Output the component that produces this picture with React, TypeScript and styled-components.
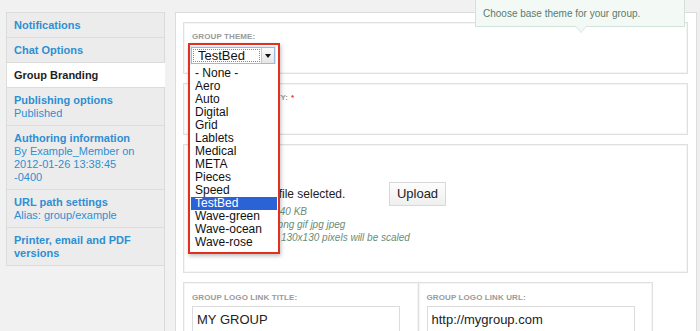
import React from 'react';
import styled, { createGlobalStyle } from 'styled-components';

const GlobalStyle = createGlobalStyle`
  html, body {
    margin: 0;
    padding: 0;
    background: #f1f1f1;
    font-family: "Liberation Sans", Arial, sans-serif;
    overflow: hidden;
  }
`;

const Page = styled.div`
  display: flex;
  align-items: stretch;
  height: 331px;
  box-sizing: border-box;
  padding: 12px 0 0 6px;
`;

const Sidebar = styled.div`
  width: 158px;
  flex: none;
  border-right: 1px solid #dadada;
`;

const TabList = styled.div`
  border-top: 1px solid #dcdcdc;
  border-left: 1px solid #dcdcdc;
`;

const Tab = styled.div<{ $active?: boolean }>`
  padding: 6px 6px 5px 7px;
  border-bottom: 1px solid #dcdcdc;
  background: ${(p) => (p.$active ? '#ffffff' : '#ececec')};
  margin-right: ${(p) => (p.$active ? '-1px' : '0')};
  font-size: 11px;
  line-height: 13px;
`;

const TabTitle = styled.div<{ $active?: boolean }>`
  font-weight: bold;
  color: ${(p) => (p.$active ? '#1e1e1e' : '#2e8fd3')};
`;

const TabNote = styled.div`
  color: #2e8fd3;
`;

const Main = styled.div`
  position: relative;
  width: 505px;
  flex: none;
  margin-left: 10px;
  background: #fff;
  border: 1px solid #dcdcdc;
  border-bottom: none;
  padding: 9px 8px 0 7px;
  display: flex;
  flex-direction: column;
  gap: 9px;
`;

const Rail = styled.div`
  width: 9px;
  flex: none;
  border-right: 1px solid #dcdcdc;
  background: #efefef;
`;

const Fieldset = styled.div<{ $pb?: number }>`
  position: relative;
  border: 1px solid #e0e0e0;
  box-shadow: inset 0 0 0 1px #f5f5f5;
  padding: 9px 8px ${(p) => p.$pb ?? 9}px;
`;

const Label = styled.div`
  font-size: 8px;
  line-height: 10px;
  font-weight: bold;
  color: #9a9a9a;
  text-transform: uppercase;
  letter-spacing: 0.1px;
`;

const Required = styled.span`
  color: #e0301e;
  margin-left: 3px;
`;

const SelectSlot = styled.div`
  position: relative;
  width: 84px;
  height: 17px;
  margin-top: 5px;
`;

const Select = styled.div`
  display: flex;
  box-sizing: border-box;
  width: 84px;
  height: 17px;
  background: #fff;
  border: 1px solid #9cbbe0;
  box-shadow: 0 0 0 1px #d7e6f6;
`;

const SelectValue = styled.div`
  flex: 1;
  margin: 1px;
  border: 1px dotted #8a8a8a;
  font-size: 13px;
  line-height: 11px;
  padding-left: 4px;
  color: #111;
`;

const SelectArrow = styled.div`
  width: 12px;
  display: flex;
  align-items: center;
  justify-content: center;
  background: linear-gradient(#fafafa, #e6e6e6);
  border-left: 1px solid #c8c8c8;
  &::after {
    content: '';
    border-left: 3px solid transparent;
    border-right: 3px solid transparent;
    border-top: 4px solid #111;
  }
`;

const Frame = styled.div`
  position: absolute;
  top: -4px;
  left: -4px;
  z-index: 5;
  width: 86px;
  border: 2px solid #e0301e;
  padding: 2px 1px 1px 1px;
  background: #fff;
  box-shadow: 1px 2px 4px rgba(0, 0, 0, 0.25);
`;

const Options = styled.div`
  background: #fff;
  padding: 3px 0 2px;
`;

const Option = styled.div<{ $selected?: boolean }>`
  font-size: 12px;
  line-height: 13px;
  height: 13px;
  padding-left: 4px;
  color: ${(p) => (p.$selected ? '#fff' : '#111')};
  background: ${(p) => (p.$selected ? '#2b62d6' : 'transparent')};
`;

const Tooltip = styled.div`
  position: absolute;
  top: -31px;
  left: 291px;
  z-index: 4;
  width: 193px;
  padding: 15px 8px 6px 7px;
  background: #f3faf6;
  border: 1px solid #d3e2db;
  font-size: 10px;
  line-height: 12px;
  color: #5a7b6e;
  &::before,
  &::after {
    content: '';
    position: absolute;
    left: 99px;
    border-left: 6px solid transparent;
    border-right: 6px solid transparent;
  }
  &::before {
    bottom: -7px;
    border-top: 7px solid #d3e2db;
  }
  &::after {
    bottom: -6px;
    border-top: 7px solid #f3faf6;
  }
`;

const FileRow = styled.div`
  display: flex;
  align-items: center;
  gap: 7px;
  margin-top: 18px;
  height: 24px;
`;

const FileInput = styled.div`
  width: 190px;
  display: flex;
  align-items: center;
  gap: 4px;
  font-size: 12px;
  color: #222;
`;

const ChooseButton = styled.div`
  width: 62px;
  height: 18px;
  border: 1px solid #bbb;
  border-radius: 3px;
  font-size: 11px;
  line-height: 18px;
  text-align: center;
  background: #f4f4f4;
`;

const UploadButton = styled.div`
  width: 55px;
  height: 22px;
  border: 1px solid #d8d8d8;
  background: linear-gradient(#fdfdfd, #efefef);
  font-size: 13px;
  line-height: 22px;
  text-align: center;
  color: #222;
`;

const Description = styled.div`
  margin-top: -1px;
  font-size: 10px;
  line-height: 13px;
  font-style: italic;
  color: #6b8c75;
`;

const LinkRow = styled.div`
  display: flex;
  width: 470px;
`;

const LinkBox = styled.div<{ $joined?: boolean }>`
  flex: 1;
  border: 1px solid #e0e0e0;
  border-left: ${(p) => (p.$joined ? 'none' : '1px solid #e0e0e0')};
  border-bottom: none;
  box-shadow: inset 0 0 0 1px #f5f5f5;
  padding: 10px 8px 0;
`;

const TextInput = styled.div`
  margin-top: 3px;
  width: 208px;
  box-sizing: border-box;
  height: 26px;
  border: 1px solid #dcdcdc;
  padding: 5px 4px;
  font-size: 13px;
  line-height: 16px;
  color: #222;
`;

const tabs = [
  { title: 'Notifications' },
  { title: 'Chat Options' },
  { title: 'Group Branding', active: true },
  { title: 'Publishing options', note: ['Published'] },
  { title: 'Authoring information', note: ['By Example_Member on', '2012-01-26 13:38:45', '-0400'] },
  { title: 'URL path settings', note: ['Alias: group/example'] },
  { title: 'Printer, email and PDF versions' },
];

const themes = [
  '- None -', 'Aero', 'Auto', 'Digital', 'Grid', 'Lablets', 'Medical',
  'META', 'Pieces', 'Speed', 'TestBed', 'Wave-green', 'Wave-ocean', 'Wave-rose',
];

const App: React.FC = () => {
  return (
    <>
      <GlobalStyle />
      <Page>
        <Sidebar>
          <TabList>
            {tabs.map((t) => (
              <Tab key={t.title} $active={t.active}>
                <TabTitle $active={t.active}>{t.title}</TabTitle>
                {t.note && t.note.map((n) => <TabNote key={n}>{n}</TabNote>)}
              </Tab>
            ))}
          </TabList>
        </Sidebar>

        <Main>
          <Fieldset>
            <Tooltip>Choose base theme for your group.</Tooltip>
            <Label>Group theme:</Label>
            <SelectSlot>
              <Frame>
                <Select>
                  <SelectValue>TestBed</SelectValue>
                  <SelectArrow />
                </Select>
                <Options>
                  {themes.map((name) => (
                    <Option key={name} $selected={name === 'TestBed'}>{name}</Option>
                  ))}
                </Options>
              </Frame>
            </SelectSlot>
          </Fieldset>

          <Fieldset>
            <Label>
              Group accessibility:<Required>*</Required>
            </Label>
            <SelectSlot>
              <Select>
                <SelectValue />
                <SelectArrow />
              </Select>
            </SelectSlot>
          </Fieldset>

          <Fieldset $pb={28}>
            <Label>Group logo:</Label>
            <FileRow>
              <FileInput>
                <ChooseButton>Choose File</ChooseButton>
                <span>No file selected.</span>
              </FileInput>
              <UploadButton>Upload</UploadButton>
            </FileRow>
            <Description>
              <div>Maximum file size:&nbsp; 40 KB</div>
              <div>Allowed file types&nbsp;: png gif jpg jpeg</div>
              <div>Images larger than&nbsp; 130x130 pixels will be scaled</div>
            </Description>
          </Fieldset>

          <LinkRow>
            <LinkBox>
              <Label>Group logo link title:</Label>
              <TextInput>MY GROUP</TextInput>
            </LinkBox>
            <LinkBox $joined>
              <Label>Group logo link URL:</Label>
              <TextInput>http://mygroup.com</TextInput>
            </LinkBox>
          </LinkRow>
        </Main>
        <Rail />
      </Page>
    </>
  );
};

export default App;
